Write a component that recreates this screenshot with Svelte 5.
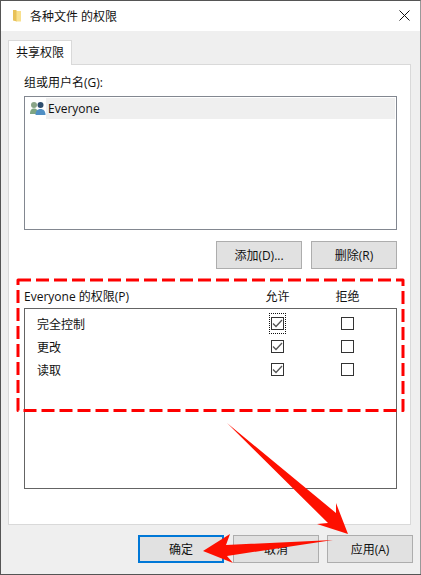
<script>
	const rows = [
		{ name: '完全控制', allow: true, deny: false, focused: true },
		{ name: '更改', allow: true, deny: false },
		{ name: '读取', allow: true, deny: false }
	];
</script>

<div class="window">
	<header class="titlebar">
		<svg class="folder" viewBox="0 0 10 13" width="10" height="13">
			<path d="M1 1h3l1 1v10.500l-4 -1z" fill="#e8c158" />
			<path d="M4.500 2H9v10.500H4.500z" fill="#f8e08e" />
		</svg>
		<span class="title">各种文件 的权限</span>
		<svg class="close" viewBox="0 0 11 11" width="11" height="11">
			<path d="M.5.500l10 10M10.500.500l-10 10" stroke="#111" stroke-width="1" fill="none" />
		</svg>
	</header>

	<div class="body">
		<div class="tabs"><div class="tab">共享权限</div></div>

		<div class="panel">
			<div class="label">组或用户名(G):</div>
			<div class="userlist">
				<div class="user">
					<svg class="users" viewBox="0 0 16 17" width="16" height="17">
						<circle cx="4" cy="5" r="3" fill="#8aa587" />
						<path d="M0 14c0-4 1.500-5.500 4-5.500s4 1.500 4 5.500z" fill="#7fa582" />
						<circle cx="10.500" cy="5" r="3" fill="#2f4f6f" />
						<path d="M5.500 15c0-4 2-6 5-6s5 2 5 6z" fill="#4f8fc4" />
					</svg>
					<span class="username">Everyone</span>
				</div>
			</div>

			<div class="actions">
				<button class="btn">添加(D)...</button>
				<button class="btn">删除(R)</button>
			</div>

			<div class="perm-head">
				<span class="perm-title">Everyone 的权限(P)</span>
				<span class="col">允许</span>
				<span class="col">拒绝</span>
			</div>

			<div class="permlist">
				{#each rows as row}
					<div class="perm-row">
						<span class="perm-name">{row.name}</span>
						<span class="col">
							<span class="check" class:focused={row.focused}>
								{#if row.allow}
									<svg viewBox="0 0 11 11" width="11" height="11">
										<path d="M1 5.500l3 3 6-6.500" stroke="#555" stroke-width="1.300" fill="none" />
									</svg>
								{/if}
							</span>
						</span>
						<span class="col"><span class="check"></span></span>
					</div>
				{/each}
			</div>
		</div>

		<div class="footer">
			<button class="btn default">确定</button>
			<button class="btn">取消</button>
			<button class="btn">应用(A)</button>
		</div>
	</div>

	<!-- annotations drawn over the dialog -->
	<svg class="marks" viewBox="0 0 421 575" width="421" height="575">
		<rect x="18" y="280" width="385" height="130.500" fill="none" stroke="#fe0000" stroke-width="3" stroke-dasharray="13 5" stroke-linejoin="round" />
		<polygon points="227,423 336,513 336,503 348,534 317,524 328,523" fill="#fe1000" />
		<polygon points="333,540 226,545 230,534 203,551 233,563 227,556" fill="#fe1000" />
	</svg>
</div>

<style>
	:global(body) {
		margin: 0;
		background: #555;
	}

	.window {
		position: relative;
		box-sizing: content-box;
		width: 419px;
		height: 573px;
		margin-left: 1px;
		border-top: 1px solid #555;
		border-right: 1px solid #999;
		background: #efefef;
		font-family: 'Open Sans', 'Noto Sans CJK SC', sans-serif;
		font-size: 12px;
		color: #111;
		overflow: hidden;
	}

	.titlebar {
		display: flex;
		align-items: center;
		height: 30px;
		padding: 0 10px 1px 11px;
		box-sizing: border-box;
		background: #fff;
	}

	.title {
		flex: 1;
		margin-left: 8px;
	}

	.body {
		padding: 9px 9px 0 7px;
	}

	.tabs {
		display: flex;
		height: 24px;
	}

	.tab {
		width: 64px;
		height: 25px;
		box-sizing: border-box;
		padding: 2px 0 0 7px;
		background: #fff;
		border: 1px solid #d9d9d9;
		border-bottom: none;
		position: relative;
		z-index: 1;
	}

	.panel {
		box-sizing: border-box;
		height: 461px;
		padding: 9px 13px 0 15px;
		background: #fff;
		border: 1px solid #d9d9d9;
	}

	.label {
		height: 22px;
		line-height: 18px;
	}

	.userlist {
		box-sizing: border-box;
		height: 134px;
		padding: 1px;
		border: 1px solid #828790;
	}

	.user {
		display: flex;
		align-items: center;
		height: 21px;
		padding-left: 4px;
	}

	.users {
		flex: none;
	}

	.username {
		flex: 1;
		align-self: stretch;
		line-height: 21px;
		background: #efefef;
		padding-left: 2px;
	}

	.actions {
		display: flex;
		justify-content: flex-end;
		gap: 9px;
		margin-top: 11px;
	}

	.btn {
		width: 86px;
		height: 28px;
		padding: 0;
		border: 1px solid #adadad;
		background: #e1e1e1;
		font: inherit;
		color: inherit;
	}

	.btn.default {
		border: 2px solid #0078d7;
		margin-right: 1px;
	}

	.perm-head {
		display: flex;
		align-items: center;
		box-sizing: border-box;
		height: 39px;
		padding: 15px 1px 0 0;
	}

	.perm-title {
		flex: 1;
	}

	.col {
		display: flex;
		justify-content: center;
		width: 70px;
	}

	.perm-head .col:last-child,
	.perm-row .col:last-child {
		margin-right: 13.500px;
	}

	.permlist {
		box-sizing: border-box;
		height: 181px;
		padding-top: 3px;
		border: 1px solid #646464;
	}

	.perm-row {
		display: flex;
		align-items: center;
		height: 23px;
		padding-left: 12px;
	}

	.perm-name {
		flex: 1;
	}

	.check {
		position: relative;
		display: flex;
		align-items: center;
		justify-content: center;
		box-sizing: border-box;
		width: 13px;
		height: 13px;
		border: 1px solid #333;
		background: #fff;
	}

	.check.focused::after {
		content: '';
		position: absolute;
		inset: -5px -3px;
		border: 1px dotted #111;
	}

	.footer {
		display: flex;
		justify-content: flex-end;
		gap: 8px;
		margin: 10px -2px 0 0;
	}

	.marks {
		position: absolute;
		left: -1px;
		top: -1px;
		pointer-events: none;
	}
</style>
